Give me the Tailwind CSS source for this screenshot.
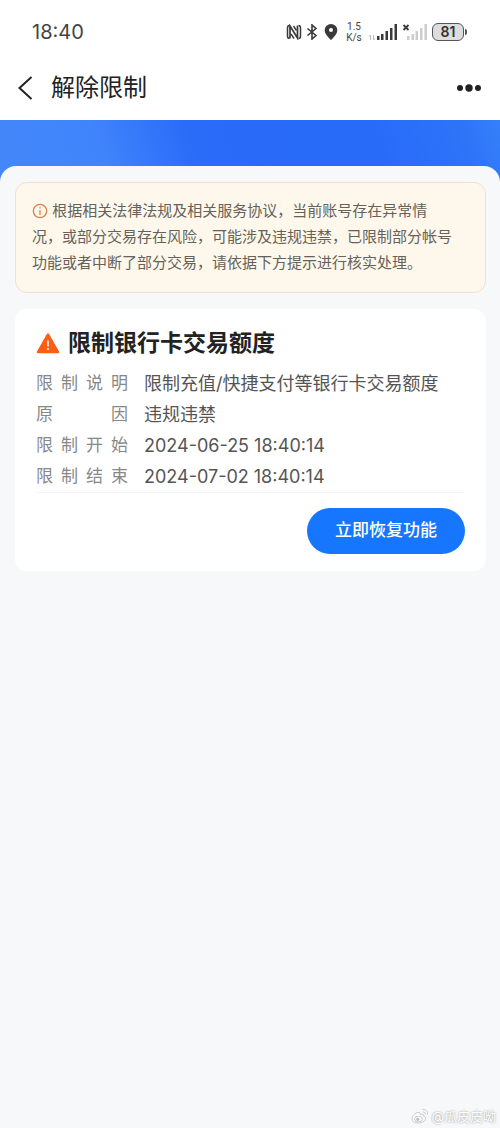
<!DOCTYPE html>
<html lang="zh-CN">
<head>
<meta charset="utf-8">
<meta name="viewport" content="width=device-width, initial-scale=1">
<title>解除限制</title>
<script src="https://cdn.jsdelivr.net/npm/@tailwindcss/browser@4"></script>
</head>
<body class="flex min-h-screen flex-col bg-[#f7f8fa] font-['Inter','Noto_Sans_CJK_SC',sans-serif] text-[#333]">
  <header class="bg-white">
    <div class="flex h-16 items-center justify-between pr-[33px] pl-8 text-[#444]">
      <time class="text-[20px] leading-6">18:40</time>
      <div class="flex items-center">
        <svg class="h-4 w-4" viewBox="0 0 16 16" fill="none" stroke="#3a3a3a" aria-label="NFC">
          <path d="M3.500 1.500Q1.500 1.500 1.500 4v8q0 2.500 2 2.500M12.500 1.500q2 0 2 2.500v8q0 2.500-2 2.500" stroke-width="1.500"/>
          <path d="M4 14.500V2l7.500 12V1.500" stroke-width="1.700"/><path d="M7.500 2l3 4.500M5 10l3 4.500" stroke-width="1.400"/>
        </svg>
        <svg class="ml-1 h-4 w-3" viewBox="0 0 12 16" fill="none" stroke="#3a3a3a" stroke-width="1.600" aria-label="蓝牙">
          <path d="M1.500 4.500l8.500 7L6 15V1l4 3.500-8.500 7"/>
        </svg>
        <svg class="ml-1.5 h-4 w-3.5" viewBox="0 0 14 16" aria-label="定位">
          <path fill="#3a3a3a" fill-rule="evenodd" d="M7 0a6.300 6.300 0 0 0-6.300 6.300c0 4 4.300 7.700 6.300 9.700 2-2 6.300-5.700 6.300-9.700A6.300 6.300 0 0 0 7 0zm0 4a2 2 0 1 1 0 4 2 2 0 0 1 0-4z"/>
        </svg>
        <div class="ml-1.5 flex w-5 flex-col items-center font-['Roboto'] text-[10px] leading-[11px]"><span>1.5</span><span>K/s</span></div>
        <svg class="ml-1 h-[18px] w-[30px]" viewBox="0 0 30 18" aria-label="信号">
          <path d="M2.500 17v-5l-1.500 1.500M5.500 12v5l1.500-1.500" fill="none" stroke="#bbb"/>
          <path fill="#3a3a3a" d="M9 13h2.500v4H9zM13 11h2.500v6H13zM17.500 8H20v9h-2.500zM22 5h2.500v12H22zM26.500 1H29v16h-2.500z"/>
        </svg>
        <svg class="ml-1 h-[18px] w-[26px]" viewBox="0 0 26 18" aria-label="无信号">
          <path d="M1.500 2l5 5m0-5l-5 5" stroke="#3a3a3a" stroke-width="1.800"/>
          <path fill="#ccc" d="M5 13h2.500v4H5zM9.500 11H12v6H9.500zM13.500 8H16v9h-2.500zM18 5h2.500v12H18zM22.500 1H25v16h-2.500z"/>
        </svg>
        <div class="ml-1 flex items-center">
          <span class="flex h-[18px] w-8 items-center justify-center rounded-md border-[1.5px] border-[#555] bg-[#ddd] text-[14px] leading-none font-semibold text-[#333]">81</span>
          <span class="ml-px h-1.5 w-0.5 rounded-r bg-[#555]"></span>
        </div>
      </div>
    </div>
    <div class="flex h-14 items-start justify-between pr-4 pl-4">
      <div class="flex h-12 items-center">
        <button type="button" aria-label="返回" class="flex">
          <svg class="h-6 w-5" viewBox="0 0 20 24" fill="none" stroke="#222" stroke-width="2"><path d="M15.500 1L3.500 12l12 11"/></svg>
        </button>
        <h1 class="ml-[15px] text-[24px] leading-8 text-[#222]">解除限制</h1>
      </div>
      <button type="button" aria-label="更多" class="flex h-12 items-center">
        <svg class="h-2 w-7" viewBox="0 0 28 8" fill="#222"><circle cx="4" cy="4" r="3"/><circle cx="13" cy="4" r="3.700"/><circle cx="22" cy="4" r="3"/></svg>
      </button>
    </div>
  </header>

  <div class="h-[68px] bg-[linear-gradient(70deg,#4388fa_0%,#4084fb_22%,#2a6bf8_40%,#286bf9_75%,#2d74f8_92%,#3580fa_100%)]"></div>

  <main class="-mt-[22px] flex-1 rounded-t-2xl bg-[#f7f8fa] pt-4 pr-3.5 pl-[15px]">
    <p class="rounded-xl border border-[#f3e0cc] bg-[#fef8ec] px-4 pt-[15px] pb-4 text-[15px] leading-[26px] text-[#666159]">
      <svg class="inline h-4 w-4 align-[-3px]" viewBox="0 0 16 16" fill="none" stroke="#d9834a" stroke-width="1.300" aria-hidden="true"><circle cx="8" cy="8" r="6.700"/><path d="M8 7v5M8 4v1.500"/></svg>
      根据相关法律法规及相关服务协议，当前账号存在异常情<br>况，或部分交易存在风险，可能涉及违规违禁，已限制部分帐号<br>功能或者中断了部分交易，请依据下方提示进行核实处理。
    </p>

    <section class="mt-4 rounded-xl bg-white px-[21px] pt-4 pb-[17px]">
      <h2 class="flex items-center gap-2 text-[23px] leading-9 font-bold text-[#222]">
        <svg class="h-6 w-6" viewBox="0 0 24 24" aria-hidden="true"><path d="M12 3.500L22 21H2z" fill="#fb5f14" stroke="#fb5f14" stroke-width="2.500" stroke-linejoin="round"/><path d="M12 9.500v6M12 17v2" stroke="#fff" stroke-width="1.500"/></svg>
        限制银行卡交易额度
      </h2>
      <dl class="mt-[7px] grid grid-cols-[92px_1fr] gap-x-4 border-b border-[#f5f5f5] text-[18px] leading-[31px] text-[#555]">
        <dt class="text-[17px] text-[#888] [text-align-last:justify]">限制说明</dt><dd>限制充值/快捷支付等银行卡交易额度</dd>
        <dt class="text-[17px] text-[#888] [text-align-last:justify]">原因</dt><dd>违规违禁</dd>
        <dt class="text-[17px] text-[#888] [text-align-last:justify]">限制开始</dt><dd>2024-06-25 18:40:14</dd>
        <dt class="text-[17px] text-[#888] [text-align-last:justify]">限制结束</dt><dd>2024-07-02 18:40:14</dd>
      </dl>
      <div class="mt-[15px] flex justify-end">
        <button type="button" class="h-[46px] rounded-full bg-[#1677fe] px-7 text-[17px] font-medium text-white">立即恢复功能</button>
      </div>
    </section>
  </main>

  <footer class="flex items-center justify-end gap-0.5 px-1 pb-1 text-[13px] leading-4 text-white [text-shadow:0_0_2px_#888]">
    <svg class="h-4 w-[18px]" viewBox="0 0 18 16" fill="#fff" stroke="#bbb" stroke-width="0.800" aria-hidden="true">
      <path d="M7 4.500C4 5 1 8 1 10.800 1 13.500 4 15 7.500 15s7-2 7-4.500c0-1.500-1-2-2-2.300.5-1.500-.5-2.700-3.500-1.700C9.300 5 8.500 4.200 7 4.500z"/>
      <ellipse cx="7.500" cy="11" rx="4" ry="2.800"/><circle cx="6.800" cy="11.300" r="1.200" fill="#bbb"/>
      <path d="M11.500 1.500c3-.5 5.500 1.800 5 5M12 4c1.500-.2 2.500.8 2.300 2.300" fill="none"/>
    </svg>
    <span>@瓜皮皮呦</span>
  </footer>
</body>
</html>
